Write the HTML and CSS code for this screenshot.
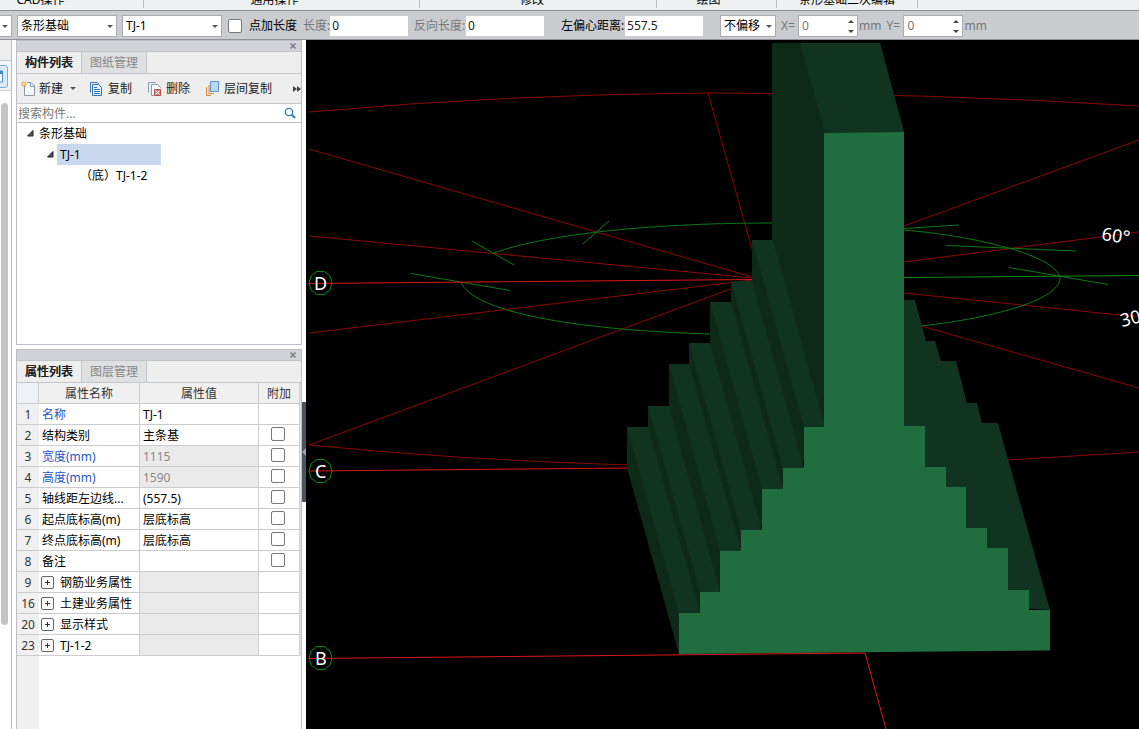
FILE: index.html
```
<!DOCTYPE html>
<html lang="zh-CN">
<head>
<meta charset="utf-8">
<title>条形基础</title>
<link rel="stylesheet" href="styles.css">
</head>
<body>
<header class="ribbon">
  <span class="group group-cad">CAD操作</span>
  <span class="group group-common">通用操作</span>
  <span class="group group-modify">修改</span>
  <span class="group group-draw">绘图</span>
  <span class="group group-edit">条形基础二次编辑</span>
</header>
<div class="options">
  <span class="pick pick-cut"><select aria-label="楼层"><option></option></select></span>
  <span class="pick pick-wide"><select aria-label="构件类型"><option>条形基础</option></select></span>
  <span class="pick pick-wide"><select aria-label="构件"><option>TJ-1</option></select></span>
  <label class="check-label"><input type="checkbox" class="check">点加长度</label>
  <label class="field muted field-len">长度:<input type="text" value="0"></label>
  <label class="field muted field-rev">反向长度:<input type="text" value="0"></label>
  <label class="field field-off">左偏心距离:<input type="text" value="557.5"></label>
  <span class="pick pick-offset"><select aria-label="偏移方式"><option>不偏移</option></select></span>
  <label class="field muted field-x"><span class="axis">X=</span><span class="spin"><input type="text" value="0"></span>mm</label>
  <label class="field muted field-y"><span class="axis">Y=</span><span class="spin"><input type="text" value="0"></span>mm</label>
</div>
<main class="workspace">
  <nav class="strip">
    <div class="strip-head"></div>
    <button class="strip-tool" aria-label="工具"><svg width="10" height="24" viewBox="0 0 10 24"><path d="M-3 .5H5Q7.500 .5 7.500 3V20Q7.500 22.500 5 22.500H-3" fill="#dcebfa" stroke="#79aee2"/><path d="M-2 6H2.500V17H-2" fill="#fff" stroke="#3f87cc"/><path d="M-2 7.500H2.500" stroke="#3f87cc" stroke-width="3"/></svg></button>
    <div class="strip-body"><div class="thumb"></div></div>
  </nav>
  <aside class="side">
    <section class="dock dock-list">
      <div class="dock-title"><button class="close" aria-label="关闭"><svg width="8" height="8" viewBox="0 0 8 8"><path d="M1.500 1.500L6.500 6.500M6.500 1.500L1.500 6.500" stroke="#777b82" stroke-width="1.500"/></svg></button></div>
      <div class="tabs"><button class="tab tab-on">构件列表</button><button class="tab">图纸管理</button></div>
      <div class="tools">
        <button class="tool tool-new"><svg width="16" height="16" viewBox="0 0 16 16"><path d="M3.500 3V14.500H13.500V5L10 1.500H6" fill="#f8f9fb" stroke="#8795a6"/><path d="M9.500 1.500V5.500H13.500" fill="none" stroke="#8795a6"/><path d="M3 0V6M0 3H6M1 1L5 5M5 1L1 5" stroke="#e9a12a"/><circle cx="3" cy="3" r="1" fill="#fff3b0"/></svg>新建<i class="arrow"></i></button>
        <button class="tool tool-copy"><svg width="16" height="16" viewBox="0 0 16 16"><path d="M1.500 11.500V1.500H8L10 3" fill="none" stroke="#3b78b8"/><path d="M3.500 3.500H9.500L12.500 6.500V14.500H3.500Z" fill="#e9f3fd" stroke="#2f72b7"/><path d="M5 6.500H8M5 8.500H11M5 10.500H11M5 12.500H11" stroke="#2f72b7"/></svg>复制</button>
        <button class="tool tool-del"><svg width="16" height="16" viewBox="0 0 16 16"><path d="M1.500 11.500V1.500H9" fill="none" stroke="#8ba0b4"/><path d="M7 14.500H4.500V3.500H10.500L13.500 6.500V7" fill="#f7f9fb" stroke="#8b9bab"/><path d="M7.500 8.500H13.500V14.500H7.500Z" fill="#d98080" stroke="#b94848"/><path d="M8.500 9.500L12.500 13.500M12.500 9.500L8.500 13.500" stroke="#fff"/></svg>删除</button>
        <button class="tool tool-floor"><svg width="16" height="16" viewBox="0 0 16 16"><path d="M1.500 6V14.500H6M4 4V12.500H9" fill="none" stroke="#df8638"/><path d="M5.500 .5H13.500V10.500H5.500Z" fill="#b9dafb" stroke="#5b8fc6"/></svg>层间复制</button>
        <button class="more" aria-label="更多"><svg width="8" height="6" viewBox="0 0 8 6"><path d="M0 0L4 3L0 6ZM4 0L8 3L4 6Z" fill="#444"/></svg></button>
      </div>
      <div class="search"><input type="text" placeholder="搜索构件..." aria-label="搜索构件"><svg width="12" height="12" viewBox="0 0 12 12"><circle cx="5" cy="5" r="3.700" fill="none" stroke="#2f7fae" stroke-width="1.300"/><path d="M7.800 7.800L11 11" stroke="#2f7fae" stroke-width="2"/></svg></div>
      <ul class="tree">
        <li class="node level-1"><svg width="7" height="7" viewBox="0 0 7 7"><path d="M6 .5V6H.5Z" fill="#555" stroke="#222"/></svg><span>条形基础</span></li>
        <li class="node level-2"><svg width="7" height="7" viewBox="0 0 7 7"><path d="M6 .5V6H.5Z" fill="#555" stroke="#222"/></svg><span class="picked">TJ-1</span></li>
        <li class="node level-3"><span>（底）TJ-1-2</span></li>
      </ul>
    </section>
    <section class="dock dock-props">
      <div class="dock-title"><button class="close" aria-label="关闭"><svg width="8" height="8" viewBox="0 0 8 8"><path d="M1.500 1.500L6.500 6.500M6.500 1.500L1.500 6.500" stroke="#777b82" stroke-width="1.500"/></svg></button></div>
      <div class="tabs"><button class="tab tab-on">属性列表</button><button class="tab">图层管理</button></div>
      <table class="props">
        <colgroup><col class="col-no"><col class="col-name"><col><col class="col-add"></colgroup>
        <thead><tr><th class="corner"></th><th>属性名称</th><th>属性值</th><th>附加</th></tr></thead>
        <tbody>
          <tr><th>1</th><td class="link">名称</td><td>TJ-1</td><td></td></tr>
          <tr><th>2</th><td>结构类别</td><td>主条基</td><td class="tick"><input type="checkbox" class="check" aria-label="附加 结构类别"></td></tr>
          <tr><th>3</th><td class="link">宽度(mm)</td><td class="off">1115</td><td class="tick"><input type="checkbox" class="check" aria-label="附加 宽度"></td></tr>
          <tr><th>4</th><td class="link">高度(mm)</td><td class="off">1590</td><td class="tick"><input type="checkbox" class="check" aria-label="附加 高度"></td></tr>
          <tr><th>5</th><td>轴线距左边线...</td><td>(557.5)</td><td class="tick"><input type="checkbox" class="check" aria-label="附加 轴线距左边线"></td></tr>
          <tr><th>6</th><td>起点底标高(m)</td><td>层底标高</td><td class="tick"><input type="checkbox" class="check" aria-label="附加 起点底标高"></td></tr>
          <tr><th>7</th><td>终点底标高(m)</td><td>层底标高</td><td class="tick"><input type="checkbox" class="check" aria-label="附加 终点底标高"></td></tr>
          <tr><th>8</th><td>备注</td><td></td><td class="tick"><input type="checkbox" class="check" aria-label="附加 备注"></td></tr>
          <tr><th>9</th><td><button class="plus" aria-label="展开"></button>钢筋业务属性</td><td class="off"></td><td></td></tr>
          <tr><th>16</th><td><button class="plus" aria-label="展开"></button>土建业务属性</td><td class="off"></td><td></td></tr>
          <tr><th>20</th><td><button class="plus" aria-label="展开"></button>显示样式</td><td class="off"></td><td></td></tr>
          <tr><th>23</th><td><button class="plus" aria-label="展开"></button>TJ-1-2</td><td class="off"></td><td></td></tr>
        </tbody>
      </table>
      <div class="props-rest"></div>
    </section>
  </aside>
  <div class="splitter"><button class="handle" aria-label="收起"><svg width="4" height="8" viewBox="0 0 4 8"><path d="M4 0V8L0 4Z" fill="#9aa5b0"/></svg></button></div>
  <div class="view">
    <svg class="scene" viewBox="306 40 833 689" preserveAspectRatio="xMinYMin slice">
      <g class="grid-dim">
        <path d="M309 112Q510 94 709 93Q930 93 1139 106"/>
        <path d="M309 149L752 277M309 236L752 278M309 333L752 280M309 445L752 281M708 93L752 249"/>
        <path d="M309 445Q460 460 627 465M1008 460L1139 452"/>
        <path d="M904 226L1139 140M904 262L1139 232M904 293L1139 317M921 326L1139 388"/>
      </g>
      <g class="compass">
        <path d="M494 253C540 236 640 223 773 223"/>
        <path d="M461 282C472 311 570 330 711 334"/>
        <path d="M904 230C985 237 1060 258 1060 279C1058 299 1000 317 921 326"/>
        <path d="M472 241L514 265M583 244L609 221M411 273.500L510 290.500M904 228.500L959 225M946 245.500L1076 251M1009 267.500L1108 284.500"/>
        <path class="axis-green" d="M904 277.500L1139 275.500"/>
      </g>
      <path class="axis-red" d="M309 283.500L752 279.500M309 471L628 468"/>
      <path class="side-dark" d="M627 468V427H648V406H669V364H689V343H710V302H731V281H752V240H772V43H880L904 132L825 427L679 654Z"/>
      <g class="side-top">
        <path d="M800 43H880L904 132L825 133Z"/>
        <path d="M627 427H648L700 613H679Z"/>
        <path d="M648 406H669L720 592H700Z"/>
        <path d="M669 364H689L741 551H720Z"/>
        <path d="M689 343H710L762 530H741Z"/>
        <path d="M710 302H731L783 489H762Z"/>
        <path d="M731 281H752L804 468H783Z"/>
        <path d="M752 240H773L825 427H804Z"/>
        <path d="M904 300H915L926 341H935L941 361H956L967 403H977L982 423H998L1050 610L904 600Z"/>
      </g>
      <path class="front" d="M679 654V613H700V592H720V551H741V530H762V489H783V468H804V427H824V133L904 132V426H925V467H946V487H966V528H987V548H1008V590H1029V610H1050V650.500Z"/>
      <path class="axis-red" d="M309 658.500L865 653L886 729"/>
      <g class="bubbles">
        <path d="M332 283L330 290L324 294.500H317L311 290L309 283L311 276L317 271.500H324L330 276Z"/>
        <path d="M332 471L330 478L324 482.500H317L311 478L309 471L311 464L317 459.500H324L330 464Z"/>
        <path d="M332 658L330 665L324 669.500H317L311 665L309 658L311 651L317 646.500H324L330 651Z"/>
      </g>
      <g class="marks">
        <text x="314" y="290">D</text>
        <text x="315" y="478">C</text>
        <text x="315" y="665">B</text>
        <text x="1101" y="240" transform="rotate(8 1101 240)">60°</text>
        <text x="1122" y="327" transform="rotate(-14 1122 327)">30°</text>
      </g>
    </svg>
  </div>
</main>
</body>
</html>
```

FILE: styles.css
```
* { box-sizing: border-box; }

body {
  margin: 0;
  height: 100vh;
  display: flex;
  flex-direction: column;
  overflow: hidden;
  background: #fff;
  color: #000;
  font: 12px/16px "Noto Sans", "Noto Sans CJK SC", sans-serif;
}

button, input, select { font: inherit; color: inherit; }
button { border: 0; padding: 0; background: none; }
svg { display: block; flex: none; }

/* ribbon captions */
.ribbon {
  display: flex;
  height: 11px;
  flex: none;
  overflow: hidden;
  background: #edf1f1;
  border-bottom: 1px solid #8b8f94;
}
.group {
  display: flex;
  align-items: flex-end;
  justify-content: center;
  height: 8px;
  border-right: 1px solid #b9bdc0;
  white-space: nowrap;
}
.group-cad { width: 144px; padding-right: 62px; }
.group-common { width: 276px; padding-right: 14px; }
.group-modify { width: 237px; padding-right: 12px; }
.group-draw { width: 120px; padding-right: 16px; }
.group-edit { width: 141px; }

/* option bar */
.options {
  display: flex;
  align-items: center;
  height: 29px;
  flex: none;
  padding-top: 1px;
  background: #caccd0;
  border-bottom: 1px solid #909398;
  white-space: nowrap;
}
.pick { position: relative; height: 22px; }
.pick select {
  display: block;
  width: 100%;
  height: 22px;
  padding: 1px 3px 0;
  border: 1px solid #a9acb1;
  border-radius: 0;
  background: #fff;
  appearance: none;
}
.pick::after {
  content: "";
  position: absolute;
  right: 4px;
  top: 10px;
  border: 3px solid transparent;
  border-top-color: #555;
  border-bottom: 0;
}
.pick-cut { width: 12px; margin-right: 5px; }
.pick-cut select { border-left: 0; }
.pick-wide { width: 100px; margin-right: 5px; }
.pick-offset { width: 56px; margin-right: 5px; }
.check {
  appearance: none;
  width: 14px;
  height: 14px;
  margin: 0;
  border: 1px solid #777;
  border-radius: 2px;
  background: #fff;
}
.check-label { display: flex; align-items: center; gap: 7px; margin: 0 6px 0 1px; }
.field { display: flex; align-items: center; }
.field > input { height: 20px; width: 78px; padding: 0 2px; border: 0; background: #fff; color: #222; }
.muted { color: #777; }
.field-len { width: 105px; justify-content: space-between; margin-right: 6px; }
.field-rev { width: 130px; justify-content: space-between; margin-right: 17px; }
.field-off { width: 142px; justify-content: space-between; margin-right: 17px; }
.axis { width: 17px; }
.spin { position: relative; margin-right: 1px; }
.spin input { display: block; width: 60px; height: 22px; padding: 0 3px; border: 1px solid #a9acb1; background: #fff; color: #777; }
.spin::before, .spin::after { content: ""; position: absolute; right: 4px; border: 3px solid transparent; }
.spin::before { top: 5px; border-bottom-color: #444; border-top: 0; }
.spin::after { bottom: 4px; border-top-color: #444; border-bottom: 0; }
.field-x { margin-right: 5px; }

/* workspace */
.workspace { display: flex; flex: 1; min-height: 0; }
.strip { display: flex; flex-direction: column; width: 12px; border-right: 1px solid #b8bbc0; flex: none; }
.strip-head { height: 21px; background: #eee; border-bottom: 1px solid #c8cacd; }
.strip-tool { height: 30px; padding-top: 3px; background: #f2f4f6; border-bottom: 1px solid #c8cacd; }
.strip-body { flex: 1; padding: 12px 3px 0 1px; }
.thumb { height: 522px; border-radius: 4px; background: #c4c4c4; }

.side { display: flex; flex-direction: column; gap: 4px; width: 286px; margin-left: 4px; flex: none; }
.dock { display: flex; flex-direction: column; border: 1px solid #bcbec2; }
.dock-list { height: 305px; }
.dock-props { flex: 1; border-bottom: 0; }
.dock-title { display: flex; justify-content: flex-end; align-items: center; height: 11px; padding-right: 4px; background: #d1d3d9; border-bottom: 1px solid #c2c4c8; }
.tabs { display: flex; height: 22px; background: #eee; border-bottom: 1px solid #c4c6c9; }
.tab { width: 65px; background: #dfe0e1; border-right: 1px solid #c4c6c9; color: #888; }
.tab-on { background: #eee; color: #222; font-weight: 500; text-shadow: 0 0 0 #222; }
.tools { display: flex; align-items: center; height: 30px; background: #eee; border-bottom: 1px solid #c4c6c9; color: #222; padding: 0 0 0 4px; }
.tool { display: flex; align-items: center; gap: 2px; white-space: nowrap; }
.tool-new { width: 68px; }
.tool-copy { width: 58px; gap: 3px; }
.tool-del { width: 58px; gap: 3px; }
.tool-floor { flex: 1; gap: 3px; }
.arrow { margin-left: 5px; border: 3px solid transparent; border-top-color: #555; border-bottom: 0; }
.search { display: flex; align-items: center; height: 19px; padding-right: 5px; border-bottom: 1px solid #bcbec2; }
.search input { flex: 1; min-width: 0; height: 18px; padding: 0 1px; border: 0; outline: 0; background: none; }
.search input::placeholder { color: #777; opacity: 1; }
.tree { list-style: none; margin: 0; padding: 0; }
.node { display: flex; align-items: center; gap: 3px; height: 21px; line-height: 21px; }
.level-1 { padding-left: 10px; gap: 5px; }
.level-2 { padding-left: 30px; }
.level-3 { padding-left: 63px; }
.picked { width: 104px; padding-left: 3px; background: #c9d8ef; }

.props { width: 100%; table-layout: fixed; border-collapse: separate; border-spacing: 0; border-right: 1px solid #e4e4e4; }
.col-no { width: 22px; }
.col-name { width: 101px; }
.col-add { width: 41px; }
.props th, .props td {
  height: 21px;
  padding: 2px 0 0 3px;
  border-right: 1px solid #ccc;
  border-bottom: 1px solid #ccc;
  font-weight: 400;
  text-align: left;
  line-height: 18px;
  white-space: nowrap;
}
.props th { padding: 2px 0 0; text-align: center; background: #f0f0f0; color: #333; }
.props tbody th { border-right: 0; }
.props .corner { background: #edf2f7; }
.props .link { color: #2457c5; }
.props .off { background: #eaeaea; color: #888; }
.props .tick { padding: 0 2px 0 0; text-align: center; }
.tick .check { display: block; margin: 0 auto 2px; }
.plus {
  width: 13px;
  height: 13px;
  margin: 0 6px 0 -1px;
  border: 1px solid #666;
  border-radius: 2px;
  vertical-align: -1px;
  background:
    linear-gradient(#333, #333) center / 5px 1px no-repeat,
    linear-gradient(#333, #333) center / 1px 5px no-repeat;
}
.props-rest { flex: 1; width: 22px; background: #f0f0f0; }

.splitter { display: flex; flex-direction: column; width: 4px; flex: none; padding-top: 362px; }
.handle { display: flex; align-items: center; justify-content: center; height: 100px; background: #4a545e; }

/* model view */
.view { flex: 1; min-width: 0; background: #000; }
.scene { width: 100%; height: 100%; }
.grid-dim { fill: none; stroke: #8c0606; }
.compass { fill: none; stroke: #0b7a16; }
.compass .axis-green { stroke: #079010; }
.axis-red { fill: none; stroke: #e01515; }
.side-dark { fill: #0d2a19; }
.side-top { fill: #10341f; }
.front { fill: #206e3f; }
.bubbles { fill: none; stroke: #0b8a1a; }
.marks { fill: #fff; font-size: 18px; }
```
